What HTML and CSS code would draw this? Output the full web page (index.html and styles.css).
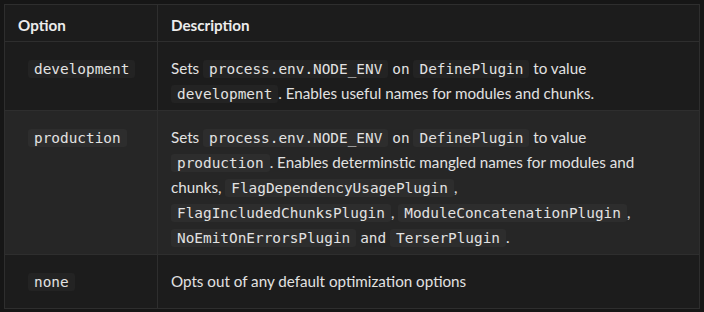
FILE: index.html
```html
<!DOCTYPE html>
<html lang="en">
<head>
    <meta charset="UTF-8">
    <meta name="viewport" content="width=device-width, initial-scale=1.0">
    <title>Optimization mode</title>
    <link rel="stylesheet" href="styles.css">
</head>
<body>
    <table class="options">
        <thead>
            <tr>
                <th class="col-option">Option</th>
                <th>Description</th>
            </tr>
        </thead>
        <tbody>
            <tr>
                <td class="col-option"><code>development</code></td>
                <td>Sets <code>process.env.NODE_ENV</code> <span class="mono">on</span> <code>DefinePlugin</code> to value <code>development</code>. Enables useful names for modules and chunks.</td>
            </tr>
            <tr class="alt">
                <td class="col-option"><code>production</code></td>
                <td>Sets <code>process.env.NODE_ENV</code> <span class="mono">on</span> <code>DefinePlugin</code> to value <code>production</code>. Enables determinstic mangled names for modules and chunks, <code>FlagDependencyUsagePlugin</code>, <code>FlagIncludedChunksPlugin</code>, <code>ModuleConcatenationPlugin</code>, <code>NoEmitOnErrorsPlugin</code> <span class="mono">and</span> <code>TerserPlugin</code>.</td>
            </tr>
            <tr class="last">
                <td class="col-option"><code>none</code></td>
                <td>Opts out of any default optimization options</td>
            </tr>
        </tbody>
    </table>
</body>
</html>
```

FILE: styles.css
```css
body {
    margin: 4px;
    background-color: #161616;
    color: #e2e2e2;
    font-family: Lato, "Noto Sans", sans-serif;
    font-size: 15.2px;
}

.options {
    width: 100%;
    border-collapse: collapse;
    background-color: #1c1c1c;
    border: 1px solid #2e2e2e;
}

.options th,
.options td {
    text-align: left;
    vertical-align: top;
    border: 1px solid #2e2e2e;
    padding: 14px 30px 4px 13px;
    line-height: 25px;
}

.options th {
    font-weight: bold;
    color: #ececec;
    padding-top: 8px;
    padding-bottom: 3px;
}

.col-option {
    width: 126px;
}

.options .col-option {
    padding-right: 13px;
}

.options .alt td {
    background-color: #262626;
}

.options .last td {
    padding-bottom: 14px;
}

code,
.mono {
    font-family: "DejaVu Sans Mono", "Liberation Mono", monospace;
    font-size: 14.4px;
    line-height: 1;
}

code {
    background-color: #232323;
    border-radius: 3px;
    padding: 1px 6px;
}

.alt code {
    background-color: #2d2d2d;
}

td.col-option code {
    margin-left: 10px;
}
```
